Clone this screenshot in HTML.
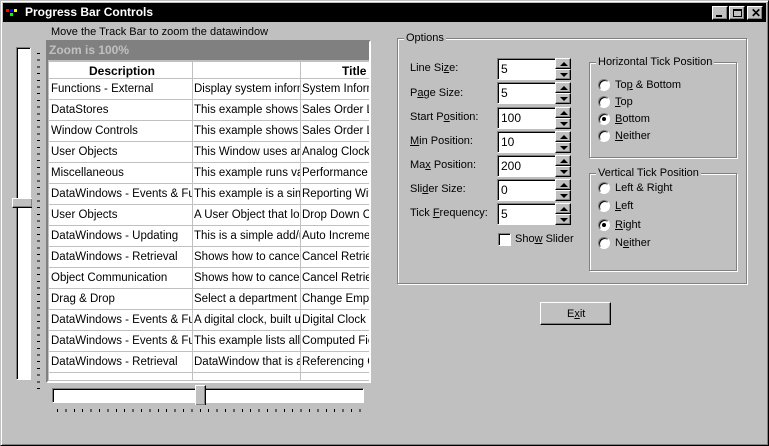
<!DOCTYPE html>
<html><head><style>
*{box-sizing:border-box;margin:0;padding:0}
body{width:769px;height:446px;background:#c0c0c0;font:11px "Liberation Sans",sans-serif;color:#000;position:relative;overflow:hidden}
.a{position:absolute}
.t{position:absolute;white-space:nowrap;line-height:14px}
.sunk{border:1px solid;border-color:#808080 #fff #fff #808080;box-shadow:inset 1px 1px 0 #000}
.raised{background:#c0c0c0;border:1px solid;border-color:#fff #000 #000 #fff;box-shadow:inset -1px -1px 0 #808080}
.grp{position:absolute;border:1px solid #808080;box-shadow:1px 1px 0 #fff,inset 1px 1px 0 #fff}
.grp>span{position:absolute;top:-8px;left:6px;background:#c0c0c0;padding:0 2px;line-height:14px}
.spin{position:absolute;width:76px;height:22px}
.spin .f{position:absolute;left:0;top:0;width:60px;height:22px;background:#fff;padding:3px 0 0 3px;font-size:12px}
.spin .u,.spin .d{position:absolute;left:58px;width:16px;height:11px}
.spin .u{top:0}.spin .d{top:11px}
.spin i{position:absolute;left:4px;width:0;height:0;border-left:4px solid transparent;border-right:4px solid transparent}
.spin .u i{top:3px;border-bottom:4px solid #000}
.spin .d i{top:3px;border-top:4px solid #000}
.rad{position:absolute;width:12px;height:12px;border-radius:50%;background:#fff;border:1px solid;border-color:#808080 #fff #fff #808080;box-shadow:inset 1px 1px 0 #000}
.rad.on:after{content:"";position:absolute;left:3px;top:3px;width:4px;height:4px;border-radius:50%;background:#000}
.dw{position:absolute;left:49px;top:62px;width:320px;height:318px;background:#fff;overflow:hidden;font-size:11.5px}
.row{position:absolute;left:0;width:320px;height:21px;border-bottom:1px solid #c0c0c0}
.row span{position:absolute;top:3px;white-space:nowrap;overflow:hidden;line-height:14px}
.c1{left:2px;width:141px}.c2{left:145px;width:106px}.c3{left:253px;width:67px}
.vl{position:absolute;top:0;width:1px;height:318px;background:#c0c0c0}
u{text-decoration:underline}
</style></head><body>
<div class="a" style="left:0;top:0;width:769px;height:446px;border:1px solid;border-color:#c0c0c0 #000 #000 #c0c0c0;box-shadow:inset 1px 1px 0 #fff,inset -1px -1px 0 #808080"></div>
<div class="a" style="left:3px;top:3px;width:763px;height:19px;background:#000"></div>
<div class="a" style="left:6px;top:9px;width:3px;height:3px;background:#f00"></div>
<div class="a" style="left:10px;top:9px;width:3px;height:3px;background:#00f"></div>
<div class="a" style="left:14px;top:9px;width:3px;height:3px;background:#ff0"></div>
<div class="a" style="left:10px;top:13px;width:3px;height:3px;background:#0f0"></div>
<div class="t" style="left:25px;top:5px;color:#fff;font-weight:bold;font-size:12px">Progress Bar Controls</div>
<div class="raised a" style="left:712px;top:6px;width:16px;height:14px"><div class="a" style="left:3px;top:8px;width:6px;height:2px;background:#000"></div></div>
<div class="raised a" style="left:729px;top:6px;width:16px;height:14px"><div class="a" style="left:3px;top:2px;width:9px;height:8px;border:1px solid #000;border-top-width:2px"></div></div>
<div class="raised a" style="left:747px;top:6px;width:16px;height:14px"><div class="t" style="left:3px;top:-1px;font-weight:bold;font-size:12px">✕</div></div>

<div class="t" style="left:51px;top:25px">Move the Track Bar to zoom the datawindow</div>

<div class="a sunk" style="left:16px;top:47px;width:15px;height:333px;background:#fff"></div>
<div class="a raised" style="left:12px;top:198px;width:20px;height:10px;border-right:none"></div>
<div class="a" style="left:37px;top:50px;width:3px;height:340px;background:repeating-linear-gradient(#c0c0c0 0 3px,#000 3px 4px,#c0c0c0 4px 6.7px)"></div>

<div class="a" style="left:46px;top:40px;width:325px;height:343px;border:2px solid;border-color:#808080 #fff #fff #808080;background:#c0c0c0"></div>
<div class="a" style="left:47px;top:41px;width:322px;height:19px;background:#808080"></div>
<div class="t" style="left:49px;top:43px;color:#c0c0c0;font-weight:bold;font-size:12px">Zoom is 100%</div>
<div class="dw">
<div class="row" style="top:0;height:17px"><span style="left:40px;top:2px;font-weight:bold;font-size:12px">Description</span><span style="left:293px;top:2px;font-weight:bold;font-size:12px">Title</span></div>
<div class="row" style="top:17px"><span class="c1">Functions - External</span><span class="c2">Display system informa</span><span class="c3">System Inform</span></div>
<div class="row" style="top:38px"><span class="c1">DataStores</span><span class="c2">This example shows a</span><span class="c3">Sales Order L</span></div>
<div class="row" style="top:59px"><span class="c1">Window Controls</span><span class="c2">This example shows a</span><span class="c3">Sales Order L</span></div>
<div class="row" style="top:80px"><span class="c1">User Objects</span><span class="c2">This Window uses an</span><span class="c3">Analog Clock</span></div>
<div class="row" style="top:101px"><span class="c1">Miscellaneous</span><span class="c2">This example runs vari</span><span class="c3">Performance I</span></div>
<div class="row" style="top:122px"><span class="c1">DataWindows - Events &amp; Functions</span><span class="c2">This example is a simp</span><span class="c3">Reporting Wit</span></div>
<div class="row" style="top:143px"><span class="c1">User Objects</span><span class="c2">A User Object that look</span><span class="c3">Drop Down C</span></div>
<div class="row" style="top:164px"><span class="c1">DataWindows - Updating</span><span class="c2">This is a simple add/up</span><span class="c3">Auto Incremen</span></div>
<div class="row" style="top:185px"><span class="c1">DataWindows - Retrieval</span><span class="c2">Shows how to cancel</span><span class="c3">Cancel Retrie</span></div>
<div class="row" style="top:206px"><span class="c1">Object Communication</span><span class="c2">Shows how to cancel</span><span class="c3">Cancel Retrie</span></div>
<div class="row" style="top:227px"><span class="c1">Drag &amp; Drop</span><span class="c2">Select a department an</span><span class="c3">Change Emplo</span></div>
<div class="row" style="top:248px"><span class="c1">DataWindows - Events &amp; Functions</span><span class="c2">A digital clock, built us</span><span class="c3">Digital Clock</span></div>
<div class="row" style="top:269px"><span class="c1">DataWindows - Events &amp; Functions</span><span class="c2">This example lists all ev</span><span class="c3">Computed Fie</span></div>
<div class="row" style="top:290px"><span class="c1">DataWindows - Retrieval</span><span class="c2">DataWindow that is a</span><span class="c3">Referencing C</span></div>
<div class="vl" style="left:143px"></div><div class="vl" style="left:251px"></div>
</div>

<div class="a sunk" style="left:52px;top:388px;width:312px;height:15px;background:#fff"></div>
<div class="a raised" style="left:195px;top:385px;width:11px;height:20px;border-bottom:none"></div>
<div class="a" style="left:57px;top:409px;width:304px;height:3px;background:repeating-linear-gradient(90deg,#000 0 1px,#c0c0c0 1px 8.4px)"></div>

<div class="grp" style="left:397px;top:38px;width:350px;height:246px"><span>Options</span></div>
<div class="t" style="left:410px;top:61px">Line Si<u>z</u>e:</div>
<div class="t" style="left:410px;top:86px">P<u>a</u>ge Size:</div>
<div class="t" style="left:410px;top:110px">Start P<u>o</u>sition:</div>
<div class="t" style="left:410px;top:134px"><u>M</u>in Position:</div>
<div class="t" style="left:410px;top:158px">Ma<u>x</u> Position:</div>
<div class="t" style="left:410px;top:182px">Sli<u>d</u>er Size:</div>
<div class="t" style="left:410px;top:206px">Tick <u>F</u>requency:</div>
<div class="spin" style="left:497px;top:58px"><div class="f sunk">5</div><div class="u raised"><i></i></div><div class="d raised"><i></i></div></div>
<div class="spin" style="left:497px;top:82px"><div class="f sunk">5</div><div class="u raised"><i></i></div><div class="d raised"><i></i></div></div>
<div class="spin" style="left:497px;top:107px"><div class="f sunk">100</div><div class="u raised"><i></i></div><div class="d raised"><i></i></div></div>
<div class="spin" style="left:497px;top:131px"><div class="f sunk">10</div><div class="u raised"><i></i></div><div class="d raised"><i></i></div></div>
<div class="spin" style="left:497px;top:155px"><div class="f sunk">200</div><div class="u raised"><i></i></div><div class="d raised"><i></i></div></div>
<div class="spin" style="left:497px;top:179px"><div class="f sunk">0</div><div class="u raised"><i></i></div><div class="d raised"><i></i></div></div>
<div class="spin" style="left:497px;top:203px"><div class="f sunk">5</div><div class="u raised"><i></i></div><div class="d raised"><i></i></div></div>
<div class="a sunk" style="left:498px;top:233px;width:13px;height:13px;background:#fff"></div>
<div class="t" style="left:515px;top:232px">Sho<u>w</u> Slider</div>

<div class="grp" style="left:589px;top:62px;width:148px;height:96px"><span>Horizontal Tick Position</span></div>
<div class="rad" style="left:598px;top:79px"></div><div class="t" style="left:615px;top:78px">To<u>p</u> &amp; Bottom</div>
<div class="rad" style="left:598px;top:96px"></div><div class="t" style="left:615px;top:95px"><u>T</u>op</div>
<div class="rad on" style="left:598px;top:113px"></div><div class="t" style="left:615px;top:112px"><u>B</u>ottom</div>
<div class="rad" style="left:598px;top:130px"></div><div class="t" style="left:615px;top:129px"><u>N</u>either</div>

<div class="grp" style="left:589px;top:173px;width:148px;height:98px"><span>Vertical Tick Position</span></div>
<div class="rad" style="left:598px;top:182px"></div><div class="t" style="left:615px;top:181px">Left &amp; Ri<u>g</u>ht</div>
<div class="rad" style="left:598px;top:200px"></div><div class="t" style="left:615px;top:199px"><u>L</u>eft</div>
<div class="rad on" style="left:598px;top:219px"></div><div class="t" style="left:615px;top:218px"><u>R</u>ight</div>
<div class="rad" style="left:598px;top:237px"></div><div class="t" style="left:615px;top:236px">N<u>e</u>ither</div>

<div class="a raised" style="left:540px;top:302px;width:71px;height:23px"></div>
<div class="t" style="left:567px;top:307px">E<u>x</u>it</div>
</body></html>
